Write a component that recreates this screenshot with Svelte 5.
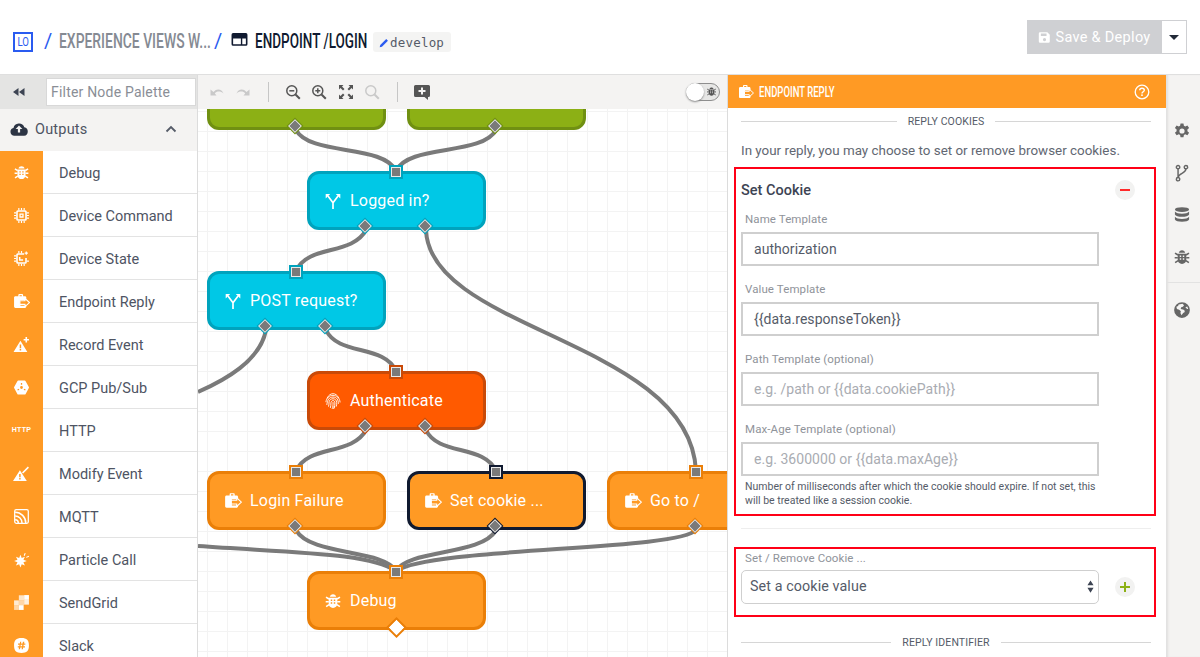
<script>
  const glyphs = {
    bug: `<path d="M5.200 4.200C5.400 2.800 6.600 2 8 2s2.600.8 2.800 2.200z"/><path d="M4.200 5.200h7.600v5.300c0 2.200-1.700 3.700-3.800 3.700s-3.800-1.500-3.800-3.700z"/><path d="M1.800 4.500l2.600 1.700M14.200 4.500l-2.600 1.700M1.500 8.600h2.800M14.500 8.600h-2.800M1.900 13l2.600-1.700M14.100 13l-2.600-1.700" fill="none" stroke="currentColor" stroke-width="1.400"/><path d="M6 7.400h1.300M8.700 7.400H10M6 9.800h1.300M8.700 9.800H10" fill="none" stroke="var(--cut)" stroke-width="1.300"/>`,
    chip: `<path fill-rule="evenodd" d="M4.500 3h7A1.500 1.500 0 0 1 13 4.500v7a1.500 1.500 0 0 1-1.500 1.500h-7A1.500 1.500 0 0 1 3 11.500v-7A1.500 1.500 0 0 1 4.500 3zM5 4.500a.5.5 0 0 0-.5.5v6a.5.5 0 0 0 .5.5h6a.5.5 0 0 0 .5-.5V5a.5.5 0 0 0-.5-.5z"/><path fill-rule="evenodd" d="M6 6h4v4H6zM7.200 7.200v1.600h1.600V7.200z"/><path d="M5.500 1v2M8 1v2M10.500 1v2M5.500 13v2M8 13v2M10.500 13v2M1 5.500h2M1 8h2M1 10.500h2M13 5.500h2M13 8h2M13 10.500h2" fill="none" stroke="currentColor" stroke-width="1.100"/>`,
    state: `<path fill-rule="evenodd" d="M4.500 3h6v1.500H5a.5.5 0 0 0-.5.5v6a.5.5 0 0 0 .5.5h6a.5.5 0 0 0 .5-.5V7.500H13v4A1.500 1.500 0 0 1 11.500 13h-7A1.500 1.500 0 0 1 3 11.500v-7A1.500 1.500 0 0 1 4.500 3z"/><path d="M6.300 6.500v3h3.200" fill="none" stroke="currentColor" stroke-width="1.400"/><path d="M5.500 1v2M8 1v2M5.500 13v2M8 13v2M10.500 13v2M1 5.500h2M1 8h2M1 10.500h2M13 10.500h2" fill="none" stroke="currentColor" stroke-width="1.100"/><path d="M12.500 1.500v3M11 3h3" fill="none" stroke="currentColor" stroke-width="1.100"/>`,
    reply: `<path fill-rule="evenodd" d="M2.300 3H5V1.800C5 1.300 5.400 1 5.900 1h2.700c.5 0 .9.300.9.8V3h1.700c.8 0 1.300.6 1.300 1.300V6.500H7v5.500h5.500v.7c0 .8-.5 1.300-1.300 1.300H2.300C1.500 14 1 13.500 1 12.700V4.300C1 3.600 1.500 3 2.300 3zM6.200 2v1h2.100V2z"/><path d="M6.500 7.300h4.800V5.200l4.200 3.800-4.200 3.800v-2.100H6.500z" fill="var(--cut)" stroke="currentColor" stroke-width="1"/>`,
    record: `<path fill-rule="evenodd" d="M7 4.500L13.500 15H.5zM6.300 8v3.500h1.400V8zm0 4.300v1.400h1.400v-1.400z"/><path d="M12.500 1v5M10 3.500h5" fill="none" stroke="currentColor" stroke-width="1.500"/>`,
    gcp: `<path fill-rule="evenodd" d="M5 1.500h6a1 1 0 0 1 .9.5l3 5.500a1 1 0 0 1 0 1l-3 5.500a1 1 0 0 1-.9.5H5a1 1 0 0 1-.9-.5l-3-5.500a1 1 0 0 1 0-1l3-5.500a1 1 0 0 1 .9-.5zM8 6.700a1.300 1.300 0 1 0 0 2.600 1.300 1.300 0 0 0 0-2.600zM7.400 3.700v1.600h1.200V3.700zM4 9.900l.6 1 1.400-.8-.6-1zm8 0l-.6 1-1.400-.8.6-1z"/>`,
    modify: `<path fill-rule="evenodd" d="M6.500 5L13 15H0zM5.800 8.500v3h1.400v-3zm0 3.800v1.400h1.400v-1.400z"/><path d="M9 7.500l5.500-5.500" fill="none" stroke="currentColor" stroke-width="1.500"/>`,
    mqtt: `<path fill-rule="evenodd" d="M3 1h10a2 2 0 0 1 2 2v10a2 2 0 0 1-2 2H3a2 2 0 0 1-2-2V3a2 2 0 0 1 2-2zM3 2.200a.8.8 0 0 0-.8.8v10c0 .4.4.8.8.8h10a.8.8 0 0 0 .8-.8V3a.8.8 0 0 0-.8-.8z"/><path d="M2 4c5.500 0 10 4.500 10 10M2 7.500c3.600 0 6.500 2.900 6.500 6.500M2 11c1.700 0 3 1.300 3 3" fill="none" stroke="currentColor" stroke-width="1.400"/>`,
    particle: `<path d="M7 3.500l1.200 3 3-1.200-1.400 2.900 3.200 1.300-3.200 1.200 1.400 3-3-1.300L7 15.500l-1.200-3.100-3 1.300 1.400-3L1 9.500l3.200-1.300-1.400-2.900 3 1.200z"/><path d="M10.500 4.500l1-2.500M12.500 6l2.500-1" fill="none" stroke="currentColor" stroke-width="1"/>`,
    sendgrid: `<path d="M5.500 5.800h5v4.700h-5z" opacity=".6"/><path d="M1 6h4.500v4.500H1z" opacity=".8"/><path d="M1 10.500h4.500V15H1z" opacity=".6"/><path d="M5.500 10.500H10V15H5.500z"/><path d="M5.500 1.200H10.500v4.600h-5z" opacity=".75"/><path d="M10.500 1H15v4.500h-4.500z"/><path d="M10.500 5.500H15V10h-4.500z" opacity=".85"/>`,
    slack: `<path fill-rule="evenodd" d="M8 1c5 0 7 2 7 7s-2 7-7 7-7-2-7-7 2-7 7-7zM6.700 4.500l-.3 1.700H4.700v1.200h1.500l-.3 1.300H4.500v1.200h1.200L5.400 11.500h1.200l.3-1.600h1.500l-.3 1.600h1.200l.3-1.600h1.700V8.700h-1.500l.3-1.300h1.500V6.200h-1.200l.3-1.700H9.300L9 6.200H7.500l.3-1.700zM7.300 7.400h1.500l-.3 1.300H7z"/>`,
    branch: `<path d="M8 15V9.500L3.500 3.500M8 9.500l4.500-6" fill="none" stroke="currentColor" stroke-width="1.500"/><path d="M1.500 5.800V1.800h4zM14.500 5.800V1.800h-4z"/>`,
    print: `<g fill="none" stroke="currentColor" stroke-width=".8"><path d="M2.800 5.500C4 2.800 6 1.500 8 1.500s4 1.300 5.200 4"/><path d="M1.700 9C2.200 5 4.800 3 8 3s6 2.200 6.300 6.300"/><path d="M2.500 11.500C3 7 4.500 4.500 8 4.500S12.800 7 12.800 10.500"/><path d="M4 13c.5-1 .3-3 .5-4.300C5 6.800 6.300 6 8 6s3.200 1 3.300 3.500c.1 1.500-.1 2.500-.5 3.500"/><path d="M5.600 14.200c.6-1.300.4-3.200.6-4.700.2-1.200 1-1.900 1.800-1.900s1.700.6 1.700 2.100c0 2-.2 3-.7 4.800"/><path d="M8 9c.2 2.500-.1 4.500-.8 6M8.500 15c.3-.7.4-1.500.5-2.500"/></g>`,
    gear: `<path fill-rule="evenodd" d="M6.700 1h2.600l.4 2 1.200.6 1.900-.9 1.500 2.200-1.500 1.300v1.600l1.500 1.400-1.500 2.200-1.900-.9-1.200.6-.4 2H6.700l-.4-2-1.200-.6-1.900.9L1.700 9.200l1.500-1.400V6.200L1.700 4.900l1.500-2.200 1.900.9 1.200-.6zM8 5.300a2.300 2.300 0 1 0 0 4.600 2.300 2.300 0 0 0 0-4.600z" transform="translate(0 .4)"/>`,
    fork: `<g fill="none" stroke="currentColor" stroke-width="1.300"><circle cx="4.500" cy="2.800" r="1.500"/><circle cx="11.500" cy="2.800" r="1.500"/><circle cx="4.500" cy="13.500" r="1.500"/><path d="M4.500 4.300V12M11.500 4.300C11.500 8.500 5 8 4.500 12"/></g>`,
    db: `<ellipse cx="8" cy="3.200" rx="6.300" ry="2.200"/><path d="M1.700 4.800c1 1.400 3.500 2 6.300 2s5.300-.6 6.300-2v2.700c-.6 1.300-3.200 2.100-6.300 2.100s-5.700-.8-6.300-2.100z"/><path d="M1.700 8.800c1 1.400 3.500 2 6.300 2s5.300-.6 6.300-2v2.300c-.6 1.300-3.200 2-6.300 2s-5.700-.7-6.300-2z" transform="translate(0 .8)"/>`,
    globe: `<path fill-rule="evenodd" d="M8 1a7 7 0 1 1 0 14A7 7 0 0 1 8 1zM5 3l-.5 1.500L3 5.200l.5 2 2 .6 1.500 1.400-.4 1.500 1 2 1.400-2 1.500-1-.5-1.700L8 7.300 6.800 7l.5-1.500 1.500-.3 1-1.500L8.500 2.500zM11 5.500l1.500 1.500 1 .1-.8-2.300z"/>`,
    save: `<path fill-rule="evenodd" d="M2.500 1.500h9l3 3v8.500a1.500 1.500 0 0 1-1.500 1.500H2.500A1.500 1.500 0 0 1 1 13V3a1.500 1.500 0 0 1 1.500-1.500zM3.500 3.200v3h7v-3zM8 8.500a2 2 0 1 0 0 4 2 2 0 0 0 0-4z"/>`,
    help: `<circle cx="8" cy="8" r="6.800" fill="none" stroke="currentColor" stroke-width="1.300"/><path d="M5.700 6.300C5.800 4.900 6.800 4.200 8 4.200c1.400 0 2.300.8 2.300 2 0 1.500-2.300 1.700-2.300 3.300" fill="none" stroke="currentColor" stroke-width="1.400"/><rect x="7.200" y="10.400" width="1.600" height="1.600"/>`,
    cloud: `<path fill-rule="evenodd" d="M4 14a3.500 3.500 0 0 1-.9-6.900A5 5 0 0 1 12.700 6.500 3.800 3.800 0 0 1 12.500 14zM8 4.800L5 8h2v3.200h2V8h2z"/>`,
    undo: `<path d="M4.500 8C6 6.300 7.500 5.500 9.200 5.500c2.400 0 4.300 1.500 5.300 4-1.500-1.500-3-2-4.700-2-1.800 0-3 .6-4 2L7.500 11.500H1.500V5.500z"/>`,
    redo: `<path d="M11.500 8C10 6.300 8.500 5.500 6.800 5.500c-2.400 0-4.300 1.500-5.300 4 1.500-1.500 3-2 4.700-2 1.800 0 3 .6 4 2L8.500 11.500h6V5.500z"/>`,
    zoomout: `<g fill="none" stroke="currentColor"><circle cx="6.800" cy="6.800" r="5" stroke-width="1.500"/><path d="M10.500 10.500l4.300 4.300" stroke-width="2"/><path d="M4.300 6.800h5" stroke-width="1.500"/></g>`,
    zoomin: `<g fill="none" stroke="currentColor"><circle cx="6.800" cy="6.800" r="5" stroke-width="1.500"/><path d="M10.500 10.500l4.300 4.300" stroke-width="2"/><path d="M4.300 6.800h5M6.800 4.300v5" stroke-width="1.500"/></g>`,
    zoomoff: `<g fill="none" stroke="currentColor"><circle cx="6.800" cy="6.800" r="5" stroke-width="1.500"/><path d="M10.500 10.500l4.300 4.300" stroke-width="2"/></g>`,
    fit: `<path d="M1 1h4.500L4 2.500l2.500 2.500-1.500 1.500L2.500 4 1 5.500zM15 1h-4.500L12 2.500 9.500 5l1.500 1.500L13.500 4 15 5.500zM1 15h4.500L4 13.500 6.500 11 5 9.500 2.500 12 1 10.500zM15 15h-4.500l1.500-1.500L9.500 11l1.500-1.500 2.500 2.500 1.500-1.500z"/>`,
    comment: `<path fill-rule="evenodd" d="M1.500 1h13A1.500 1.500 0 0 1 16 2.500v9a1.500 1.500 0 0 1-1.500 1.500H14v3l-3.500-3h-9A1.500 1.500 0 0 1 0 11.500v-9A1.500 1.500 0 0 1 1.500 1zM7 3.500V6H4.500v2H7v2.500h2V8h2.500V6H9V3.500z"/>`,
    window: `<path fill-rule="evenodd" d="M2 1h12a1.500 1.500 0 0 1 1.500 1.500v9A1.500 1.500 0 0 1 14 13H2a1.500 1.500 0 0 1-1.500-1.500v-9A1.500 1.500 0 0 1 2 1zM2 4.200v7.300h7.300V6H2zM10.600 6v5.500h3.400V6z"/>`,
    pencil: `<path d="M1 15l.8-3.200L10.500 3l2.500 2.500-8.700 8.700z"/>`
  };

  const palette = [
    ['Debug', 'bug'], ['Device Command', 'chip'], ['Device State', 'state'],
    ['Endpoint Reply', 'reply'], ['Record Event', 'record'], ['GCP Pub/Sub', 'gcp'],
    ['HTTP', null], ['Modify Event', 'modify'], ['MQTT', 'mqtt'],
    ['Particle Call', 'particle'], ['SendGrid', 'sendgrid'], ['Slack', 'slack']
  ];

  const nodes = [
    { x: 9, y: 0, tone: 'green', clip: true, outs: [89] },
    { x: 209, y: 0, tone: 'green', clip: true, outs: [89] },
    { x: 109, y: 62, tone: 'cyan', label: 'Logged in?', icon: 'branch', ins: true, outs: [59, 119] },
    { x: 9, y: 162, tone: 'cyan', label: 'POST request?', icon: 'branch', ins: true, outs: [59, 119] },
    { x: 109, y: 262, tone: 'red', label: 'Authenticate', icon: 'print', ins: true, outs: [59, 119] },
    { x: 9, y: 362, tone: 'orange', label: 'Login Failure', icon: 'reply', ins: true, outs: [89] },
    { x: 209, y: 362, tone: 'orange sel', label: 'Set cookie ...', icon: 'reply', ins: true, outs: [89] },
    { x: 409, y: 362, tone: 'orange', label: 'Go to /', icon: 'reply', ins: true, outs: [89] },
    { x: 109, y: 462, tone: 'orange', label: 'Debug', icon: 'bug', ins: true, outs: [89], open: true }
  ];

  const links = [
    'M98 21C112 47 186 35 198 62',
    'M298 21C284 47 210 35 198 62',
    'M168 121C154 147 110 135 98 162',
    'M228 121C232 222 492 232 498 362',
    'M68 221C62 252 27 271 0 283',
    'M128 221C140 247 186 235 198 262',
    'M168 321C154 347 110 335 98 362',
    'M228 321C240 347 286 335 298 362',
    'M98 421C112 447 186 440 198 462',
    'M298 421C284 447 210 440 198 462',
    'M498 421C480 442 232 438 198 462',
    'M0 437C100 444 172 444 198 462'
  ];

  const fields = [
    { label: 'Name Template', value: 'authorization' },
    { label: 'Value Template', value: '{{data.responseToken}}' },
    { label: 'Path Template (optional)', placeholder: 'e.g. /path or {{data.cookiePath}}' },
    { label: 'Max-Age Template (optional)', placeholder: 'e.g. 3600000 or {{data.maxAge}}' }
  ];
</script>

{#snippet icon(name, cls = '')}
  <svg class="ic {cls}" viewBox="0 0 16 16" fill="currentColor" aria-hidden="true">{@html glyphs[name]}</svg>
{/snippet}

<div class="page">
  <header class="top">
    <div class="crumbs">
      <span class="logo"><span>LO</span></span>
      <span class="slash">/</span>
      <span class="crumb muted"><span>EXPERIENCE VIEWS W...</span></span>
      <span class="slash second">/</span>
      {@render icon('window', 'win')}
      <span class="crumb strong"><span>ENDPOINT /LOGIN</span></span>
      <span class="badge">{@render icon('pencil', 'pen')}develop</span>
    </div>
    <div class="deploy">
      <button class="save">{@render icon('save', 'disk')}Save &amp; Deploy</button>
      <button class="caret" aria-label="More"><i></i></button>
    </div>
  </header>

  <div class="work">
    <aside class="palette">
      <div class="filter-bar">
        <svg class="rewind" viewBox="0 0 12 8" fill="currentColor"><path d="M5.500 0v8L0 4zM11.500 0v8L6 4z"/></svg>
        <div class="filter">Filter Node Palette</div>
      </div>
      <div class="group">
        {@render icon('cloud', 'cloud')}
        <span>Outputs</span>
        <svg class="chev" viewBox="0 0 12 8" fill="none" stroke="currentColor" stroke-width="1.800"><path d="M1.500 6.500L6 2l4.500 4.500"/></svg>
      </div>
      {#each palette as [name, glyph]}
        <div class="item">
          <div class="swatch">
            {#if glyph}{@render icon(glyph, 'pal')}{:else}<span class="http">HTTP</span>{/if}
          </div>
          <span class="iname">{name}</span>
        </div>
      {/each}
    </aside>

    <main class="editor">
      <div class="tools">
        <span class="tool off">{@render icon('undo')}</span>
        <span class="tool off">{@render icon('redo')}</span>
        <span class="rule"></span>
        <span class="tool">{@render icon('zoomout')}</span>
        <span class="tool">{@render icon('zoomin')}</span>
        <span class="tool">{@render icon('fit')}</span>
        <span class="tool off">{@render icon('zoomoff')}</span>
        <span class="rule"></span>
        <span class="tool">{@render icon('comment')}</span>
        <div class="toggle"><b></b>{@render icon('bug', 'tbug')}</div>
      </div>
      <div class="canvas">
        <svg class="wires" viewBox="0 0 529 548" width="529" height="548">
          {#each links as d}<path {d} />{/each}
        </svg>
        {#each nodes as n}
          <div class="node {n.tone}" class:clip={n.clip} style="left:{n.x}px;top:{n.clip ? -38 : n.y}px">
            {#if n.ins}<span class="in"></span>{/if}
            {#if n.label}
              {@render icon(n.icon, 'nic')}
              <span class="nlabel">{n.label}</span>
            {/if}
            {#each n.outs as o}
              <span class="out" class:open={n.open} style="left:{o}px"></span>
            {/each}
          </div>
        {/each}
      </div>
    </main>

    <section class="panel">
      <div class="phead">
        {@render icon('reply', 'phic')}
        <span class="ptitle"><span>ENDPOINT REPLY</span></span>
        {@render icon('help', 'qmark')}
      </div>
      <div class="pbody">
        <div class="sect"><span>REPLY COOKIES</span></div>
        <p class="intro">In your reply, you may choose to set or remove browser cookies.</p>

        <div class="mark first">
          <div class="cookiehead">
            <h3>Set Cookie</h3>
            <span class="round minus"></span>
          </div>
          {#each fields as f}
            <div class="lab">{f.label}</div>
            <div class="input" class:ph={!f.value}>{f.value ?? f.placeholder}</div>
          {/each}
          <p class="hint">Number of milliseconds after which the cookie should expire. If not set, this<br />will be treated like a session cookie.</p>
        </div>

        <hr />

        <div class="mark second">
          <div class="lab">Set / Remove Cookie ...</div>
          <div class="selrow">
            <div class="select">Set a cookie value
              <svg viewBox="0 0 8 14" fill="#3d4453"><path d="M4 0l3.500 5.500h-7zM4 14L.5 8.500h7z"/></svg>
            </div>
            <span class="round plus"></span>
          </div>
        </div>

        <div class="sect lower"><span>REPLY IDENTIFIER</span></div>
      </div>
    </section>

    <nav class="rail">
      <div class="railtop">
        {@render icon('gear')}
        {@render icon('fork')}
        {@render icon('db')}
        {@render icon('bug')}
      </div>
      <div class="railbot">{@render icon('globe')}</div>
    </nav>
  </div>
</div>

<style>
  :global(body) { margin: 0; background: #fff; }
  .page {
    --orange: #ff9a24; --ink: #4e5463;
    width: 1200px; height: 657px; overflow: hidden; display: flex; flex-direction: column;
    font-family: Roboto, sans-serif; color: var(--ink);
  }
  .ic { display: block; flex: none; width: 16px; height: 16px; --cut: #fff; }

  .top { height: 75px; flex: none; display: flex; justify-content: space-between; padding: 20px 13px 0 13px; box-sizing: border-box; border-bottom: 1px solid #dfdfdf; }
  .crumbs { display: flex; align-items: center; height: 44px; }
  .logo { width: 20px; height: 20px; box-sizing: border-box; border: 2px solid #2a5bf0; color: #2a5bf0; font-size: 12px; display: flex; align-items: center; justify-content: center; }
  .logo span { transform: scaleX(.8); }
  .slash { color: #2a5bf0; font-size: 20px; width: 7px; margin: -2px 8px 0 11px; }
  .slash.second { margin: -2px 10px 0 6px; }
  .crumb { font-size: 20px; font-weight: 500; white-space: nowrap; margin-top: -2px; }
  .crumb span { display: inline-block; transform-origin: left center; }
  .muted { color: #858a93; width: 149px; }
  .muted span { transform: scaleX(.695); }
  .strong { color: #101a30; width: 113px; margin-left: 7px; }
  .strong span { transform: scaleX(.675); }
  .win { color: #101a30; width: 17px; height: 17px; margin-top: -3px; }
  .badge { display: flex; align-items: center; margin-left: 5px; width: 78px; box-sizing: border-box; height: 20px; padding: 0 7px 0 6px; border-radius: 3px; background: #f4f4f3; font: 12.500px "DejaVu Sans Mono", monospace; letter-spacing: .2px; color: #555b68; }
  .pen { width: 11px; height: 11px; color: #2a5bf0; }

  .deploy { display: flex; height: 34px; }
  .deploy button { border: 0; padding: 0; font-family: inherit; }
  .save { width: 135px; background: #cfd0d3; color: #fff; font-size: 14.500px; letter-spacing: .3px; display: flex; align-items: center; justify-content: center; gap: 4px; }
  .disk { width: 13px; height: 13px; }
  .caret { width: 25px; background: #fff; box-sizing: border-box; border: 1px solid #cfd0d3 !important; border-left: 0 !important; display: flex; align-items: center; justify-content: center; }
  .caret i { border: 5px solid transparent; border-top-color: #222a38; border-bottom: 0; }

  .work { flex: 1; min-height: 0; display: flex; }

  .palette { width: 197px; flex: none; overflow: hidden; background: #fff; border-right: 1px solid #dcdcdc; }
  .filter-bar { height: 34px; background: #e4e4e3; display: flex; align-items: center; padding-left: 13px; }
  .rewind { width: 12px; height: 8px; color: #3d4453; margin-right: 21px; }
  .filter { width: 150px; height: 28px; box-sizing: border-box; background: #fff; border: 1px solid #d8d8d8; padding-left: 4px; line-height: 26px; color: #8a8e96; font-size: 14px; letter-spacing: .2px; white-space: nowrap; }
  .group { height: 42px; box-sizing: border-box; padding: 0 20px 2px 10px; display: flex; align-items: center; background: #f4f3f2; font-size: 14.500px; letter-spacing: .2px; color: var(--ink); }
  .cloud { width: 18px; height: 18px; color: #2c3444; margin-right: 7px; }
  .chev { width: 12px; height: 8px; margin-left: auto; color: #555b68; }
  .item { height: 43px; box-sizing: border-box; border-bottom: 1px solid #e3e3e3; display: flex; align-items: center; font-size: 14.500px; white-space: nowrap; }
  .iname { margin-top: 2px; }
  .swatch { width: 43px; height: 43px; margin-bottom: -1px; background: var(--orange); color: #fff; flex: none; margin-right: 16px; display: flex; align-items: center; justify-content: center; }
  .pal { width: 17px; height: 17px; --cut: var(--orange); }
  .http { font: 700 7px "Liberation Sans", sans-serif; letter-spacing: .3px; margin-top: -2px; }

  .editor { width: 529px; flex: none; display: flex; flex-direction: column; min-width: 0; }
  .tools { height: 34px; flex: none; background: #f4f3f2; display: flex; align-items: center; padding-left: 11px; position: relative; color: #555; }
  .tool { width: 16px; height: 16px; margin-right: 10.500px; display: block; }
  .tool.off { color: #c9c9c9; }
  .tool:nth-child(2) { margin-right: 0; margin-left: -1px; }
  .rule { width: 1px; height: 20px; background: #c6c6c6; margin: 0 16px 0 17px; }
  .tool:nth-child(7) { margin-right: 0; }
  .toggle { position: absolute; left: 488px; top: 8px; width: 34px; height: 18px; box-sizing: border-box; border: 1.500px solid #8e8e8e; border-radius: 9px; background: #e7e7e6; }
  .toggle b { position: absolute; left: -1px; top: -1px; width: 18px; height: 18px; border-radius: 50%; background: #fff; box-shadow: 0 1px 2px #888; }
  .tbug { position: absolute; right: 2px; top: 2px; width: 11px; height: 11px; color: #555; --cut: #e7e7e6; }

  .canvas {
    flex: 1; position: relative; overflow: hidden; background-color: #fff;
    background-image: linear-gradient(#f3f3f3 1px, transparent 1px), linear-gradient(90deg, #f3f3f3 1px, transparent 1px);
    background-size: 20px 20px; background-position: 9px 2px;
  }
  .wires { position: absolute; left: 0; top: 0; }
  .wires path { fill: none; stroke: #7a7a7a; stroke-width: 4px; }
  .node {
    position: absolute; width: 179px; height: 59px; box-sizing: border-box; border: 3px solid; border-radius: 12px;
    display: flex; align-items: center; padding-left: 14px; color: #fff; font-size: 16px; --b: #000; border-color: var(--b); background: var(--f);
  }
  .node.green { --f: #8cb015; --b: #709012; }
  .node.cyan { --f: #00c8e6; --b: #00a3bd; }
  .node.red { --f: #ff5a00; --b: #c94a08; }
  .node.orange { --f: #ff9a24; --b: #ea7f08; }
  .node.sel { --b: #101a30; }
  .nic { width: 18px; height: 18px; --cut: var(--f); margin-right: 8px; }
  .nlabel { white-space: nowrap; letter-spacing: .2px; }
  .in {
    position: absolute; left: 81px; top: -7px; width: 8px; height: 8px; box-sizing: content-box;
    background: #7a7a7a; border: 1px solid #e9e9e9; outline: 2px solid var(--b);
  }
  .out {
    position: absolute; bottom: -4px; width: 8px; height: 8px; margin-left: -9px; transform: rotate(45deg);
    background: #7a7a7a; border: 1.500px solid #f2f2f2; outline: 1.500px solid var(--b); box-sizing: content-box;
  }
  .out.open { background: #fff; border-color: #fff; width: 9px; height: 9px; bottom: -6px; margin-left: -8.500px; outline-width: 2.500px; border-width: 1px; }

  .panel { width: 439px; flex: none; display: flex; flex-direction: column; border-left: 1px solid #dcdcdc; box-sizing: border-box; min-width: 0; background: #fff; }
  .phead { height: 33px; flex: none; background: var(--orange); color: #fff; display: flex; align-items: center; padding: 0 16px 0 10px; }
  .phic { width: 16px; height: 16px; margin-right: 5px; --cut: var(--orange); }
  .ptitle { font-size: 14px; font-weight: 500; flex: 1; white-space: nowrap; }
  .ptitle span { display: inline-block; transform: scaleX(.68); transform-origin: left center; }
  .qmark { width: 16px; height: 16px; }
  .pbody { flex: 1; padding: 0 15px 0 13px; position: relative; overflow: hidden; }
  .sect { display: flex; align-items: center; gap: 11px; font-size: 10.500px; color: #555b68; height: 13px; margin-top: 7px; letter-spacing: .1px; white-space: nowrap; }
  .sect::before, .sect::after { content: ""; flex: 1; height: 1px; background: #d6d6d6; }
  .sect.lower { margin-top: 19px; }
  .intro { margin: 14px 0 0; font-size: 13.400px; line-height: 18px; color: #626772; white-space: nowrap; }
  .mark { border: 2px solid #ff0016; margin: 0 -5px 0 -7px; padding: 0 8px 0 5px; box-sizing: border-box; }
  .mark.first { margin-top: 7px; height: 349px; }
  .mark.second { margin-top: 18px; height: 70px; padding-top: 1px; }
  .cookiehead { display: flex; justify-content: space-between; align-items: center; height: 42px; padding-right: 11px; }
  h3 { margin: 0; font-size: 14.500px; font-weight: 500; color: #3d4453; }
  .round { width: 20px; height: 20px; border-radius: 50%; background: #f2f2f1; position: relative; flex: none; }
  .minus::after, .plus::after, .plus::before { content: ""; position: absolute; left: 5px; top: 9px; width: 10px; height: 2px; }
  .minus::after { background: #ff2a2a; }
  .plus::after, .plus::before { background: #8cb015; }
  .plus::before { transform: rotate(90deg); }
  .lab { font-size: 11.500px; color: #8f939a; height: 15px; line-height: 16px; padding-left: 4px; letter-spacing: .1px; }
  .input {
    width: 358px; height: 34px; box-sizing: border-box; border: 2px solid #cfcfcf;
    line-height: 30px; padding-left: 11px; font-size: 14px; color: #555b68; margin: 6px 0 15px; letter-spacing: .05px;
  }
  .input.ph { color: #a9acb2; }
  .hint { margin: -11px 0 0 4px; font-size: 10.500px; line-height: 13.500px; color: #555b68; white-space: nowrap; }
  hr { border: 0; border-top: 1px solid #eeeeee; margin: 12px 0 0; }
  .selrow { display: flex; align-items: center; margin-top: 5px; }
  .select { width: 358px; height: 34px; box-sizing: border-box; border: 1px solid #cfcfcf; border-radius: 5px; line-height: 31px; padding-left: 8px; font-size: 14.300px; color: #555b68; position: relative; letter-spacing: .1px; }
  .select svg { position: absolute; right: 4px; top: 9px; width: 7px; height: 13px; }
  .plus { margin-left: 16px; }

  .rail { width: 34px; flex: none; background: #f4f3f2; border-left: 1px solid #e2e2e2; box-sizing: border-box; box-shadow: inset 2px 0 3px -2px #ccc; color: #666; }
  .railtop { display: flex; flex-direction: column; align-items: center; gap: 24px; padding: 47px 3px 0 0; height: 208px; box-sizing: border-box; border-bottom: 1px solid #e2e2e2; }
  .railbot { display: flex; justify-content: center; padding: 18px 3px 0 0; }
  .rail .ic { --cut: #f4f3f2; width: 18px; height: 18px; }
</style>
